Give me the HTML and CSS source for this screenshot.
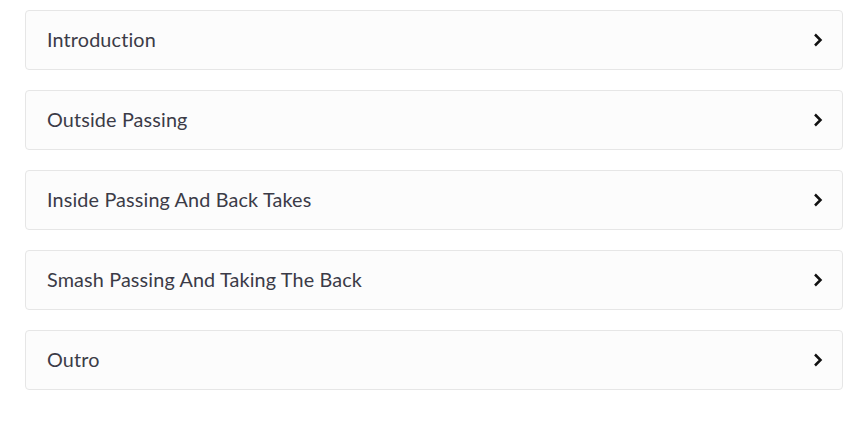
FILE: index.html
```html
<!DOCTYPE html>
<html>
<head>
<meta charset="utf-8">
<link rel="stylesheet" href="styles.css">
</head>
<body>
<div class="list">
  <div class="item"><span class="title">Introduction</span><svg class="chev" width="10" height="14" viewBox="0 0 10 14"><path d="M2 1.5 L7.5 7 L2 12.5" fill="none" stroke="#111" stroke-width="2.5"/></svg></div>
  <div class="item"><span class="title">Outside Passing</span><svg class="chev" width="10" height="14" viewBox="0 0 10 14"><path d="M2 1.5 L7.5 7 L2 12.5" fill="none" stroke="#111" stroke-width="2.5"/></svg></div>
  <div class="item"><span class="title">Inside Passing And Back Takes</span><svg class="chev" width="10" height="14" viewBox="0 0 10 14"><path d="M2 1.5 L7.5 7 L2 12.5" fill="none" stroke="#111" stroke-width="2.5"/></svg></div>
  <div class="item"><span class="title">Smash Passing And Taking The Back</span><svg class="chev" width="10" height="14" viewBox="0 0 10 14"><path d="M2 1.5 L7.5 7 L2 12.5" fill="none" stroke="#111" stroke-width="2.5"/></svg></div>
  <div class="item"><span class="title">Outro</span><svg class="chev" width="10" height="14" viewBox="0 0 10 14"><path d="M2 1.5 L7.5 7 L2 12.5" fill="none" stroke="#111" stroke-width="2.5"/></svg></div>
</div>
</body>
</html>
```
FILE: styles.css
```css
html, body { margin: 0; padding: 0; background: #fff; }
body { padding: 10px 22px 0 25px; font-family: "Lato", "Liberation Sans", sans-serif; }
.list { display: flex; flex-direction: column; gap: 20px; }
.item {
  height: 60px;
  box-sizing: border-box;
  border: 1px solid #e6e6e6;
  border-radius: 4px;
  background: #fcfcfc;
  display: flex;
  align-items: center;
  justify-content: space-between;
  padding: 0 19px 0 21px;
}
.title { font-size: 19.8px; letter-spacing: 0.15px; color: #3b3b47; margin-top: -3px; }
.chev { display: block; }
```
